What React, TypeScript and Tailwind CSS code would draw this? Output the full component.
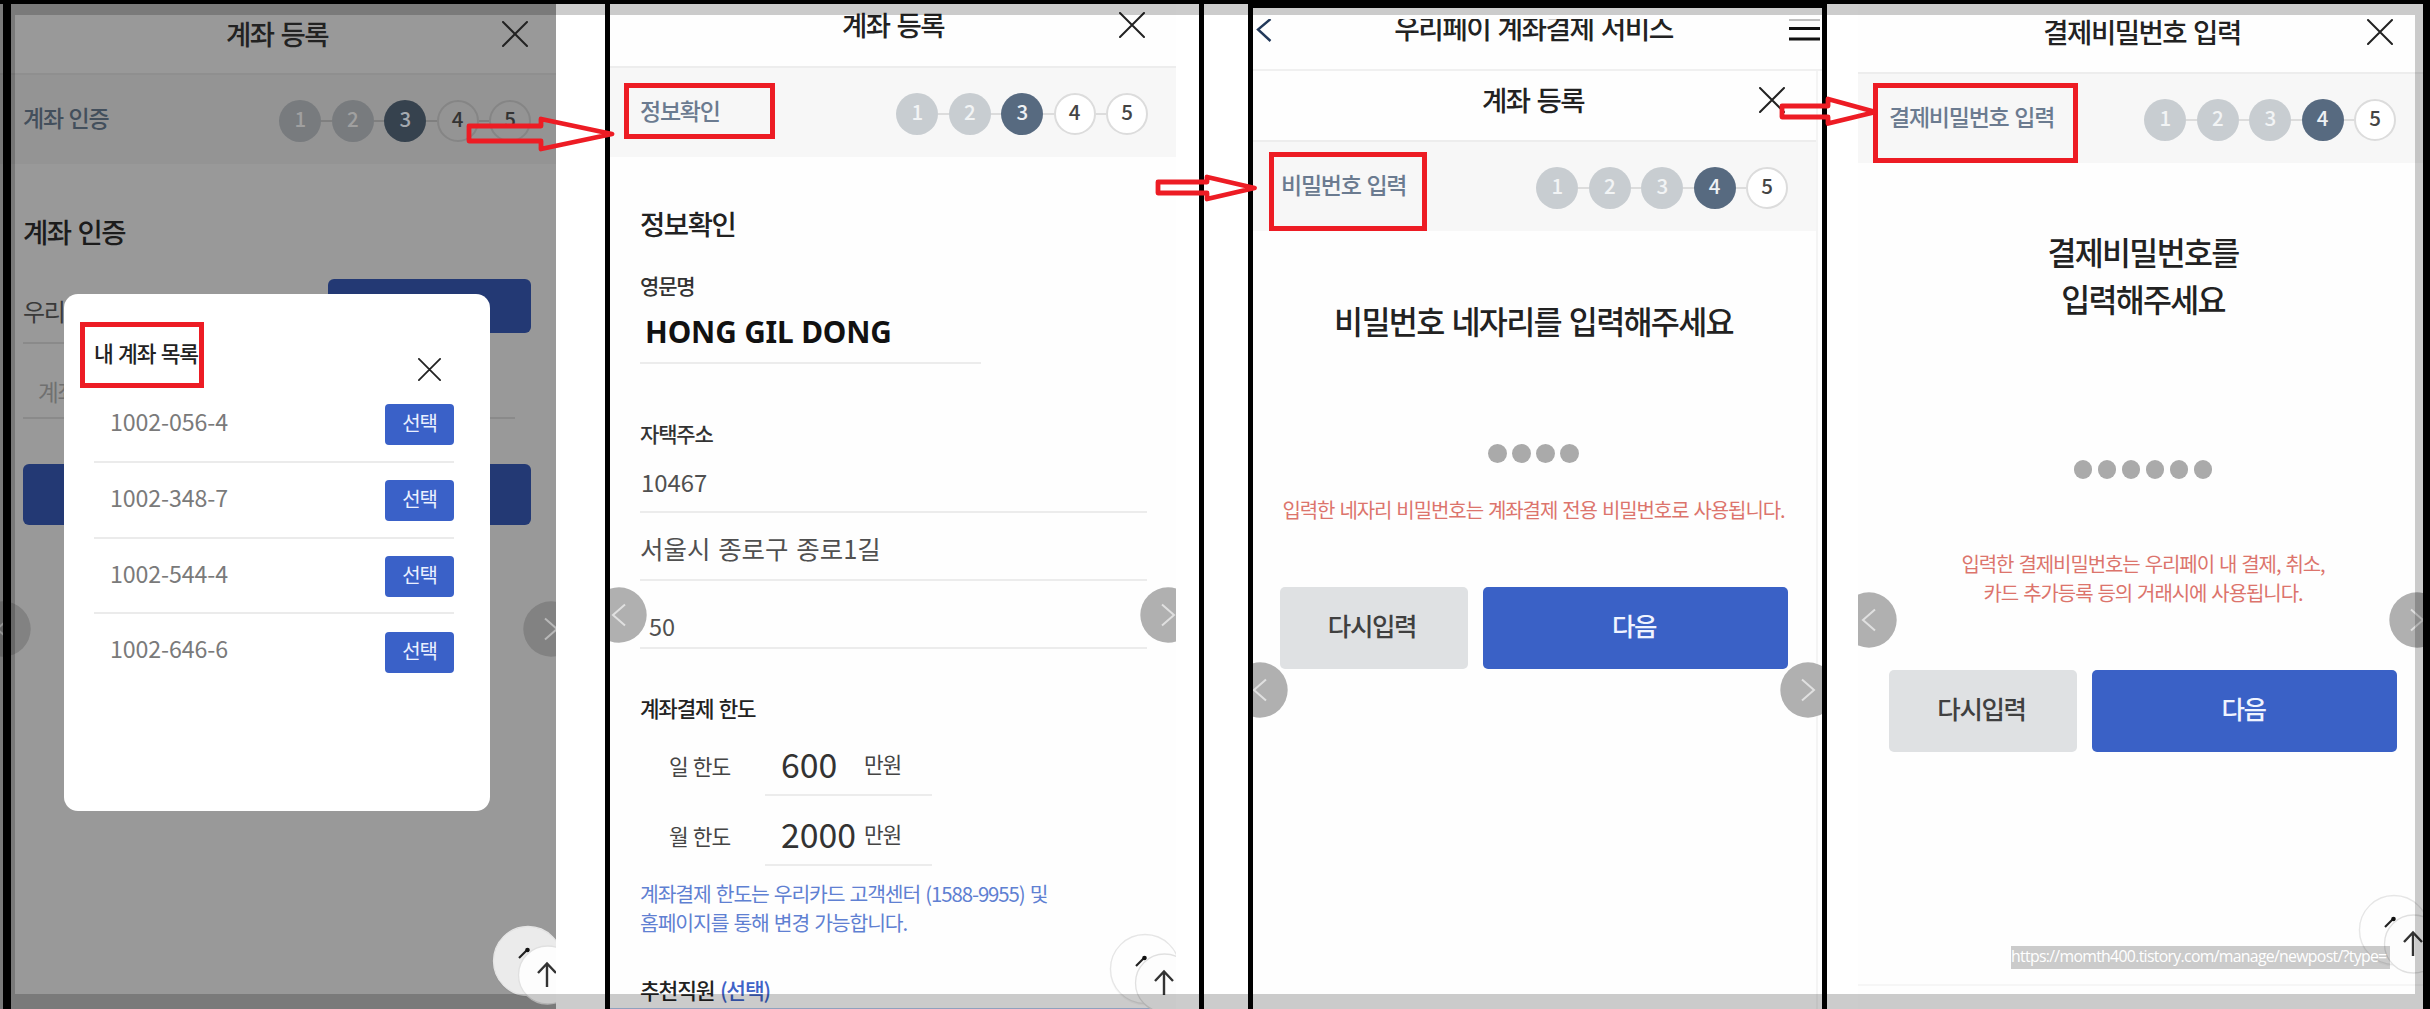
import type { ReactNode } from 'react';
import clsx from 'clsx';

const accounts = ['1002-056-4', '1002-348-7', '1002-544-4', '1002-646-6'];

const CloseIcon = ({ className }: { className?: string }) => (
  <svg viewBox="0 0 26 26" className={className} fill="none" stroke="currentColor" strokeWidth="2" strokeLinecap="round">
    <path d="M1 1L25 25M25 1L1 25" />
  </svg>
);

const Header = ({ title, className }: { title: string; className?: string }) => (
  <header className={clsx('text-[#222]', className)}>
    <div className="grid h-7 grid-cols-[1fr_auto_1fr] items-center">
      <span />
      <h1 className="text-[27.5px] leading-7 font-medium">{title}</h1>
      <CloseIcon className="mt-px size-[26px] justify-self-end" />
    </div>
  </header>
);

type StepsProps = {
  label: string;
  current: number;
  dim?: boolean;
  className?: string;
};

const Steps = ({ label, current, dim, className }: StepsProps) => (
  <div
    className={clsx(
      'flex h-[91px] items-center justify-between border-t-2',
      dim ? 'border-[#8f8f8f] bg-[#949494]' : 'border-[#ededed] bg-[#f7f7f7]',
      className
    )}
  >
    <span className={clsx('mb-[5px] text-[23px] leading-6 font-medium', dim ? 'text-[#434f5c]' : 'text-[#6b7b90]')}>{label}</span>
    <ol className="mt-[3px] flex items-center">
      {[1, 2, 3, 4, 5].map((n) => (
        <li key={n} className="flex items-center">
          {n > 1 && <span className={clsx('h-[2px] w-[10.4px]', dim ? 'bg-[#7f7f7f]' : 'bg-[#dcdcdc]')} />}
          <span
            className={clsx(
              'flex size-[42px] items-center justify-center rounded-full pb-[7px] text-[20.5px] leading-6 font-medium tracking-normal!',
              n < current && (dim ? 'bg-[#787b7e] text-[#a0a0a0]' : 'bg-[#c8cdd1] text-[#f2f4f5]'),
              n === current && (dim ? 'bg-[#36424e] text-[#a5aab0]' : 'bg-[#576a80] text-[#eef1f4]'),
              n > current && (dim ? 'border-2 border-[#858585] text-[#333]' : 'border-2 border-[#dcdcdc] bg-white text-[#444]')
            )}
          >
            {n}
          </span>
        </li>
      ))}
    </ol>
  </div>
);

const SlideButton = ({ dir, dim, className }: { dir: 'left' | 'right'; dim?: boolean; className: string }) => (
  <svg viewBox="0 0 56 56" className={clsx('absolute size-[56px]', className)} fill="none">
    <circle cx="28" cy="28" r="27.7" fill={dim ? '#828282' : '#b0b0b0'} />
    <path
      d={dir === 'left' ? 'M34 17.5L22 28L34 38.5' : 'M22 17.5L34 28L22 38.5'}
      stroke={dim ? '#b8b8b8' : '#e0e0e0'}
      strokeWidth="2"
    />
  </svg>
);

// two stacked "scroll to top" buttons
const TopButtons = ({ dim, className }: { dim?: boolean; className: string }) => (
  <svg viewBox="0 0 100 90" className={clsx('absolute h-[90px] w-[100px]', className)} fill="none">
    <circle cx="40" cy="40" r="35.5" fill="#000" opacity="0.03" />
    <circle cx="40" cy="39" r="34.5" fill={dim ? '#ebebeb' : '#fefefe'} stroke={dim ? '#e4e4e4' : '#e6e6e6'} strokeWidth="1.3" />
    <path d="M31 36L38.5 28.5" stroke="#222" strokeWidth="2.2" />
    <circle cx="39.5" cy="28" r="2.3" fill="#111" />
    <circle cx="59.5" cy="53" r="29" fill="#fdfdfd" stroke="#e0e0e0" strokeWidth="1.3" />
    <path d="M59 65V42M50 51L59 41.5L68 51" stroke="#333" strokeWidth="2.4" />
  </svg>
);

const Bar = ({ className }: { className: string }) => <div className={clsx('shrink-0 bg-black', className)} />;

const Dots = ({ count, className }: { count: number; className: string }) => (
  <div className={clsx('flex justify-center gap-[5.5px]', className)}>
    {Array.from({ length: count }, (_, i) => (
      <span key={i} className="size-[18.5px] rounded-full bg-[#aaa]" />
    ))}
  </div>
);

const Actions = ({ className }: { className: string }) => (
  <div className={clsx('flex justify-center gap-[15px] text-[25.5px] leading-7 font-medium', className)}>
    <button className="h-[82px] w-[188px] rounded-[5px] bg-[#dfe1e3] pr-[3px] pb-[5px] text-[#404040]">다시입력</button>
    <button className="h-[82px] w-[305px] rounded-[5px] bg-[#3a61c6] pr-[2px] pb-[5px] text-[#f0f4ff]">다음</button>
  </div>
);

const Field = ({ children, className }: { children: ReactNode; className?: string }) => (
  <div className={clsx('flex h-[68px] items-center border-b-2 border-[#ececec] text-[#505050]', className)}>{children}</div>
);

const Limit = ({ label, amount }: { label: string; amount: string }) => (
  <div className="flex h-[70px] pl-[29px] text-[21.4px] text-[#444]">
    <span className="mt-7 w-24 leading-6">{label}</span>
    <div className="flex w-[167px] items-center border-b-2 border-[#ececec] pt-2 pl-4">
      <span className="w-[83px] text-[33.8px] leading-8 tracking-normal! text-[#333]">{amount}</span>
      <span className="leading-6">만원</span>
    </div>
  </div>
);

const AccountPanel = () => (
  <section className="relative w-[605px] shrink-0 overflow-hidden bg-white">
    <div className="relative h-full w-[556px] overflow-hidden bg-[#999]">
      <Header title="계좌 등록" className="h-[69px] pt-[15px] pr-[28px] pl-[26px]" />
      <Steps label="계좌 인증" current={3} dim className="pr-[25px] pl-[23px]" />
      <div className="pr-[25px] pl-[23px]">
        <h2 className="mt-[53px] text-[27.5px] leading-7 font-medium text-[#1c1c1c]">계좌 인증</h2>
        <div className="mt-[34px] flex justify-between">
          <div className="flex h-[65px] w-[290px] items-center border-b-2 border-[#8a8a8a] text-[24px] text-[#3a3a3a]">우리은행</div>
          <div className="h-[54px] w-[203px] rounded-md bg-[#233974]" />
        </div>
        <div className="h-[75px] w-[492px] border-b-2 border-[#8a8a8a] pt-[35px] pl-[15px] text-[22.5px] leading-6 text-[#707070]">계좌번호</div>
        <div className="mt-[45px] h-[61px] rounded-md bg-[#233974]" />
      </div>

      <SlideButton dir="left" dim className="top-[597px] -left-[25px]" />
      <SlideButton dir="right" dim className="top-[597px] left-[523px]" />
      <TopButtons dim className="top-[918px] left-[488px]" />

      <div className="absolute top-[290px] left-16 h-[517px] w-[426px] rounded-[14px] bg-white px-[30px] pt-[47px] pr-9">
        <div className="flex h-[46px] justify-between text-[#222]">
          <h3 className="text-[21.5px] leading-6 font-medium">내 계좌 목록</h3>
          <CloseIcon className="mt-[17px] mr-[13px] size-[23px]" />
        </div>
        <ul>
          {accounts.map((no) => (
            <li key={no} className="flex h-[75.8px] items-center justify-between border-b-2 border-[#ebebeb] last:border-transparent">
              <span className="mb-[5px] pl-4 text-[23.2px] tracking-[-0.1px]! text-[#7a7a7a]">{no}</span>
              <button className="mt-[2px] h-[41px] w-[69px] rounded bg-[#3a61c8] pb-[3px] text-[20px] leading-6 text-[#eaf0ff]">선택</button>
            </li>
          ))}
        </ul>
      </div>
    </div>
    <div className="absolute inset-y-0 left-[3px] w-[7.5px] bg-black" />
  </section>
);

const InfoPanel = () => (
  <section className="w-[589px] shrink-0 overflow-hidden bg-white">
    <div className="relative h-full w-[566px] overflow-hidden bg-[#fefefe]">
      <Header title="계좌 등록" className="h-[62px] px-[31px] pt-[6px]" />
      <Steps label="정보확인" current={3} className="pr-[28px] pl-[30px]" />
      <div className="pr-[29px] pl-[30px]">
        <h2 className="mt-[52px] text-[27.5px] leading-7 font-medium text-[#222]">정보확인</h2>
        <h3 className="mt-9 text-[21px] leading-6 font-medium text-[#333]">영문명</h3>
        <div className="flex h-[67px] w-[341px] items-center border-b-2 border-[#ececec] pt-[6px] pl-[5px] font-['Noto_Sans',sans-serif] text-[29.8px] font-bold tracking-[-0.15px]! [word-spacing:0]! text-[#111]">
          HONG GIL DONG
        </div>
        <h3 className="mt-[57px] text-[21px] leading-6 font-medium text-[#333]">자택주소</h3>
        <Field className="pt-2 pl-px text-[23.9px] tracking-normal!">10467</Field>
        <Field className="pt-[5px] text-[25.5px] tracking-normal!">서울시 종로구 종로1길</Field>
        <Field className="pt-[25px] pl-[9px] text-[23.5px] tracking-normal!">50</Field>
        <h3 className="mt-[47px] mb-[6px] text-[21.2px] leading-6 font-medium text-[#222]">계좌결제 한도</h3>
        <Limit label="일 한도" amount="600" />
        <Limit label="월 한도" amount="2000" />
        <p className="mt-[13px] text-[20.4px] leading-[29px] text-[#5f80d2]">
          계좌결제 한도는 우리카드 고객센터 (1588-9955) 및
          <br />
          홈페이지를 통해 변경 가능합니다.
        </p>
        <h3 className="mt-[41px] text-[21.5px] leading-6 font-medium text-[#222]">
          추천직원 <span className="text-[#3f63c8]">(선택)</span>
        </h3>
      </div>
      <div className="absolute inset-x-0 bottom-0 h-px bg-[#b4caee]" />

      <SlideButton dir="left" className="top-[583px] -left-[19px]" />
      <SlideButton dir="right" className="top-[583px] left-[530px]" />
      <TopButtons className="top-[926px] left-[495px]" />
    </div>
  </section>
);

const PasswordPanel = () => (
  <section className="relative w-[569px] shrink-0 overflow-hidden bg-[#fefefe]">
    <Bar className="h-1" />
    <div className="mt-[11px] flex h-[52px] items-start justify-between overflow-hidden border-b-2 border-[#f0f0f0]">
      <svg viewBox="0 0 16 23" className="ml-[3px] h-[23px] w-4" fill="none" stroke="#22395a" strokeWidth="2.4">
        <path d="M14.5 0L2 10.5L14.5 22" />
      </svg>
      <h1 className="-mt-[6px] ml-[6px] text-[27.8px] leading-7 font-medium text-[#222]">우리페이 계좌결제 서비스</h1>
      <svg viewBox="0 0 31 23" className="mr-[2px] h-[23px] w-[31px]" stroke="#111" strokeWidth="3">
        <path d="M0 9.5H31M0 20H31" />
        <path d="M0 1H31" stroke="#aaa" strokeWidth="1.5" />
      </svg>
    </div>
    <div className="h-full w-[565px] border-r-2 border-[#f4f4f4]">
      <Header title="계좌 등록" className="h-[69px] pt-[14px] pr-[31px] pl-[28px]" />
      <Steps label="비밀번호 입력" current={4} className="pr-[28px] pl-[28px]" />
      <div className="pr-[2px]">
        <h2 className="mt-[69px] text-center text-[31.6px] leading-10 font-medium text-[#222]">비밀번호 네자리를 입력해주세요</h2>
        <Dots count={4} className="mt-[104px]" />
        <p className="mt-[35px] text-center text-[20px] leading-6 whitespace-nowrap text-[#dc746c]">
          입력한 네자리 비밀번호는 계좌결제 전용 비밀번호로 사용됩니다.
        </p>
        <Actions className="mt-[65px]" />
      </div>
    </div>
    <SlideButton dir="left" className="top-[658px] -left-[21px]" />
    <SlideButton dir="right" className="top-[658px] left-[527px]" />
  </section>
);

const PaymentPasswordPanel = () => (
  <section className="w-[596px] shrink-0 overflow-hidden bg-white pl-[31px]">
    <div className="relative h-full w-[570px] bg-[#fefefe]">
      <Header title="결제비밀번호 입력" className="h-[68px] pt-[13px] pr-[35px] pl-[33px]" />
      <Steps label="결제비밀번호 입력" current={4} className="pr-[32px] pl-[31px]" />
      <h2 className="mt-[65px] text-center text-[31.5px] leading-[47px] font-medium text-[#222]">
        결제비밀번호를
        <br />
        입력해주세요
      </h2>
      <Dots count={6} className="mt-[138px]" />
      <p className="mt-[70px] text-center text-[20px] leading-[29px] text-[#dc746c]">
        입력한 결제비밀번호는 우리페이 내 결제, 취소,
        <br />
        카드 추가등록 등의 거래시에 사용됩니다.
      </p>
      <Actions className="mt-[63px]" />
      <div className="mt-[232px] h-[2px] bg-[#f6f6f6]" />
      <SlideButton dir="left" className="top-[588px] left-[-17px] [clip-path:inset(0_0_0_17px)]" />
      <SlideButton dir="right" className="top-[588px] left-[531px]" />
      <TopButtons className="top-[887px] left-[496px]" />
      <div className="absolute top-[942px] left-[153px] h-[23px] w-[379px] bg-black/20 font-['Open_Sans',sans-serif] text-[15.8px] leading-[21px] font-medium tracking-[-0.68px]! whitespace-nowrap text-white">
        https://momth400.tistory.com/manage/newpost/?type=
      </div>
    </div>
  </section>
);

const Marker = ({ className }: { className: string }) => <div className={clsx('absolute border-[5px] border-[#ed1c24]', className)} />;

const App = () => (
  <div className="relative flex h-[1009px] w-[2430px] flex-col overflow-hidden bg-white font-['Noto_Sans_CJK_KR',sans-serif] [&_*]:tracking-[-0.054em] [&_*]:[word-spacing:0.08em]">
    <Bar className="h-1" />
    <main className="flex min-h-0 flex-1">
      <AccountPanel />
      <Bar className="w-[5px]" />
      <InfoPanel />
      <Bar className="w-[5px]" />
      <div className="w-11 shrink-0" />
      <Bar className="w-[5px]" />
      <PasswordPanel />
      <Bar className="w-[5px]" />
      <PaymentPasswordPanel />
      <Bar className="w-[7px]" />
    </main>

    <div className="pointer-events-none absolute inset-0 border-[15px] border-black/20" />

    {/* annotations */}
    <Marker className="top-[322px] left-[80px] h-[66px] w-[124px]" />
    <Marker className="top-[83px] left-[624px] h-[56px] w-[151px]" />
    <Marker className="top-[152px] left-[1269px] h-[79px] w-[158px]" />
    <Marker className="top-[83px] left-[1873px] h-[80px] w-[205px]" />
    <svg viewBox="0 0 2430 1009" className="pointer-events-none absolute inset-0 h-full w-full" fill="none" stroke="#ed1c24" strokeWidth="4.8" strokeLinejoin="round">
      <path d="M469 126H541V119L612 134L541 149V141H469Z" />
      <path d="M1158 182H1207V177L1254.5 188L1207 199V193H1158Z" />
      <path d="M1782 106H1828V99L1875.5 112L1828 123.5V117H1782Z" />
    </svg>
  </div>
);

export default App;
